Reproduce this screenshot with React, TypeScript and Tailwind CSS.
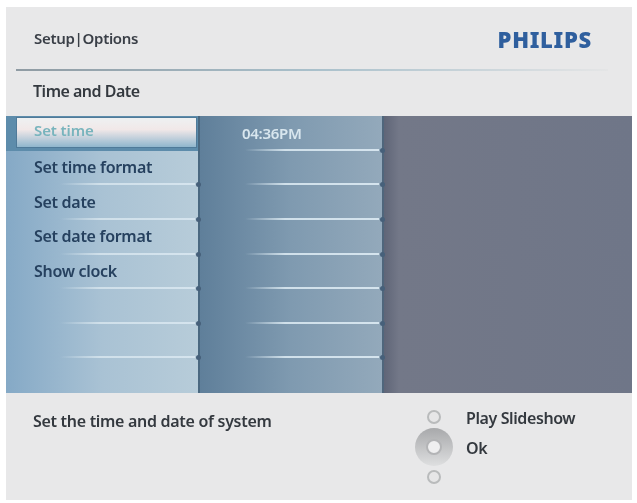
const menuItems = ["Set time", "Set time format", "Set date", "Set date format", "Show clock", "", "", ""];

function RowLine({ left }: { left: string }) {
  return (
    <>
      <div className={`absolute bottom-0 right-[3px] h-[2px] bg-gradient-to-r from-transparent via-[#d0e0ea] via-30% to-[#d5e4ee] ${left}`} />
      <div className="absolute bottom-[-2px] right-[-3px] z-10 h-[5px] w-[5px] rounded-full bg-[#46607a]" />
    </>
  );
}

function NavDial() {
  return (
    <div className="mt-[2px] flex w-[38px] flex-col items-center">
      <div className="h-[14px] w-[14px] rounded-full border-2 border-[#b9bbbc] bg-[#e6e6e7]" />
      <div className="my-[4px] flex h-[38px] w-[38px] items-center justify-center rounded-full bg-gradient-to-b from-[#a8a9ab] to-[#dedfe0]">
        <div className="h-[16px] w-[16px] rounded-full border-2 border-[#b3b4b6] bg-[#efeff0]" />
      </div>
      <div className="h-[14px] w-[14px] rounded-full border-2 border-[#b9bbbc] bg-[#e6e6e7]" />
    </div>
  );
}

export default function App() {
  return (
    <div className="h-[503px] w-[637px] overflow-hidden bg-white pb-[3px] pl-[6px] pt-[7px] font-['Noto_Sans',sans-serif]">
      <div className="flex h-full w-[626px] flex-col bg-[#e8e8e9] blur-[0.5px]">
        <header className="flex h-[62px] shrink-0 items-center justify-between pl-[28px] pr-[40px] pt-[1px]">
          <span className="text-[15px] font-semibold tracking-[-0.3px] text-[#3a3f47]">Setup|Options</span>
          <span className="text-[22px] font-black leading-none tracking-[0.7px] text-[#2f5f9e]">PHILIPS</span>
        </header>
        <div className="ml-[10px] h-[2px] w-[592px] shrink-0 bg-gradient-to-r from-[#8f9ba3] via-[#a9c0cb] to-[#e4e5e6]" />
        <div className="flex h-[45px] shrink-0 items-center pb-[5px] pl-[27px]">
          <span className="text-[16px] font-semibold tracking-[-0.5px] text-[#34393f]">Time and Date</span>
        </div>

        <section className="flex h-[277px] shrink-0">
          <div className="grid w-[194px] grid-rows-8 border-r-2 border-[#4a6880] bg-gradient-to-r from-[#85a9c6] via-[#a9c2d4] to-[#b7ccd9]">
            {menuItems.map((item, index) =>
              index === 0 ? (
                <div key={index} className="relative bg-[#5d8cab] pb-[3px] pl-[10px] pr-[1px] pt-[1px]">
                  <div className="flex h-full items-center border border-[#4f7a99] bg-gradient-to-b from-[#eef1f2] via-[#f1e8e8] via-40% to-[#8fb6cd] pb-[5px] pl-[17px]">
                    <span className="text-[15px] font-semibold tracking-[-0.1px] text-[#78b4bd]">{item}</span>
                  </div>
                </div>
              ) : (
                <div key={index} className="relative flex items-center pb-[2px] pl-[28px]">
                  <span className="text-[16px] font-semibold tracking-[-0.3px] text-[#26415f]">{item}</span>
                  {index < 7 && <RowLine left="left-[54px]" />}
                </div>
              ),
            )}
          </div>

          <div className="grid w-[184px] grid-rows-8 border-r-2 border-[#4f667c] bg-gradient-to-r from-[#5f7f9a] via-[#7f9ab0] to-[#93a9bb]">
            {menuItems.map((_, index) => (
              <div key={index} className="relative flex items-center pl-[42px]">
                {index === 0 && <span className="text-[15px] font-semibold tracking-[-0.3px] text-[#d8e6ee]">04:36PM</span>}
                {index < 7 && <RowLine left="left-[45px]" />}
              </div>
            ))}
          </div>

          <div className="flex-1 bg-gradient-to-r from-[#5f6577] from-0% via-[#737888] via-[6%] to-[#6f7688]" />
        </section>

        <footer className="flex flex-1 items-start pl-[27px] pt-[16px]">
          <span className="w-[382px] text-[16px] font-semibold tracking-[-0.3px] text-[#34393f]">
            Set the time and date of system
          </span>
          <div className="-mt-[1px] flex">
            <NavDial />
            <div className="ml-[13px] flex flex-col gap-[9px] text-[16px] font-semibold leading-[21px] tracking-[-0.4px] text-[#34393f]">
              <span>Play Slideshow</span>
              <span>Ok</span>
            </div>
          </div>
        </footer>
      </div>
    </div>
  );
}
